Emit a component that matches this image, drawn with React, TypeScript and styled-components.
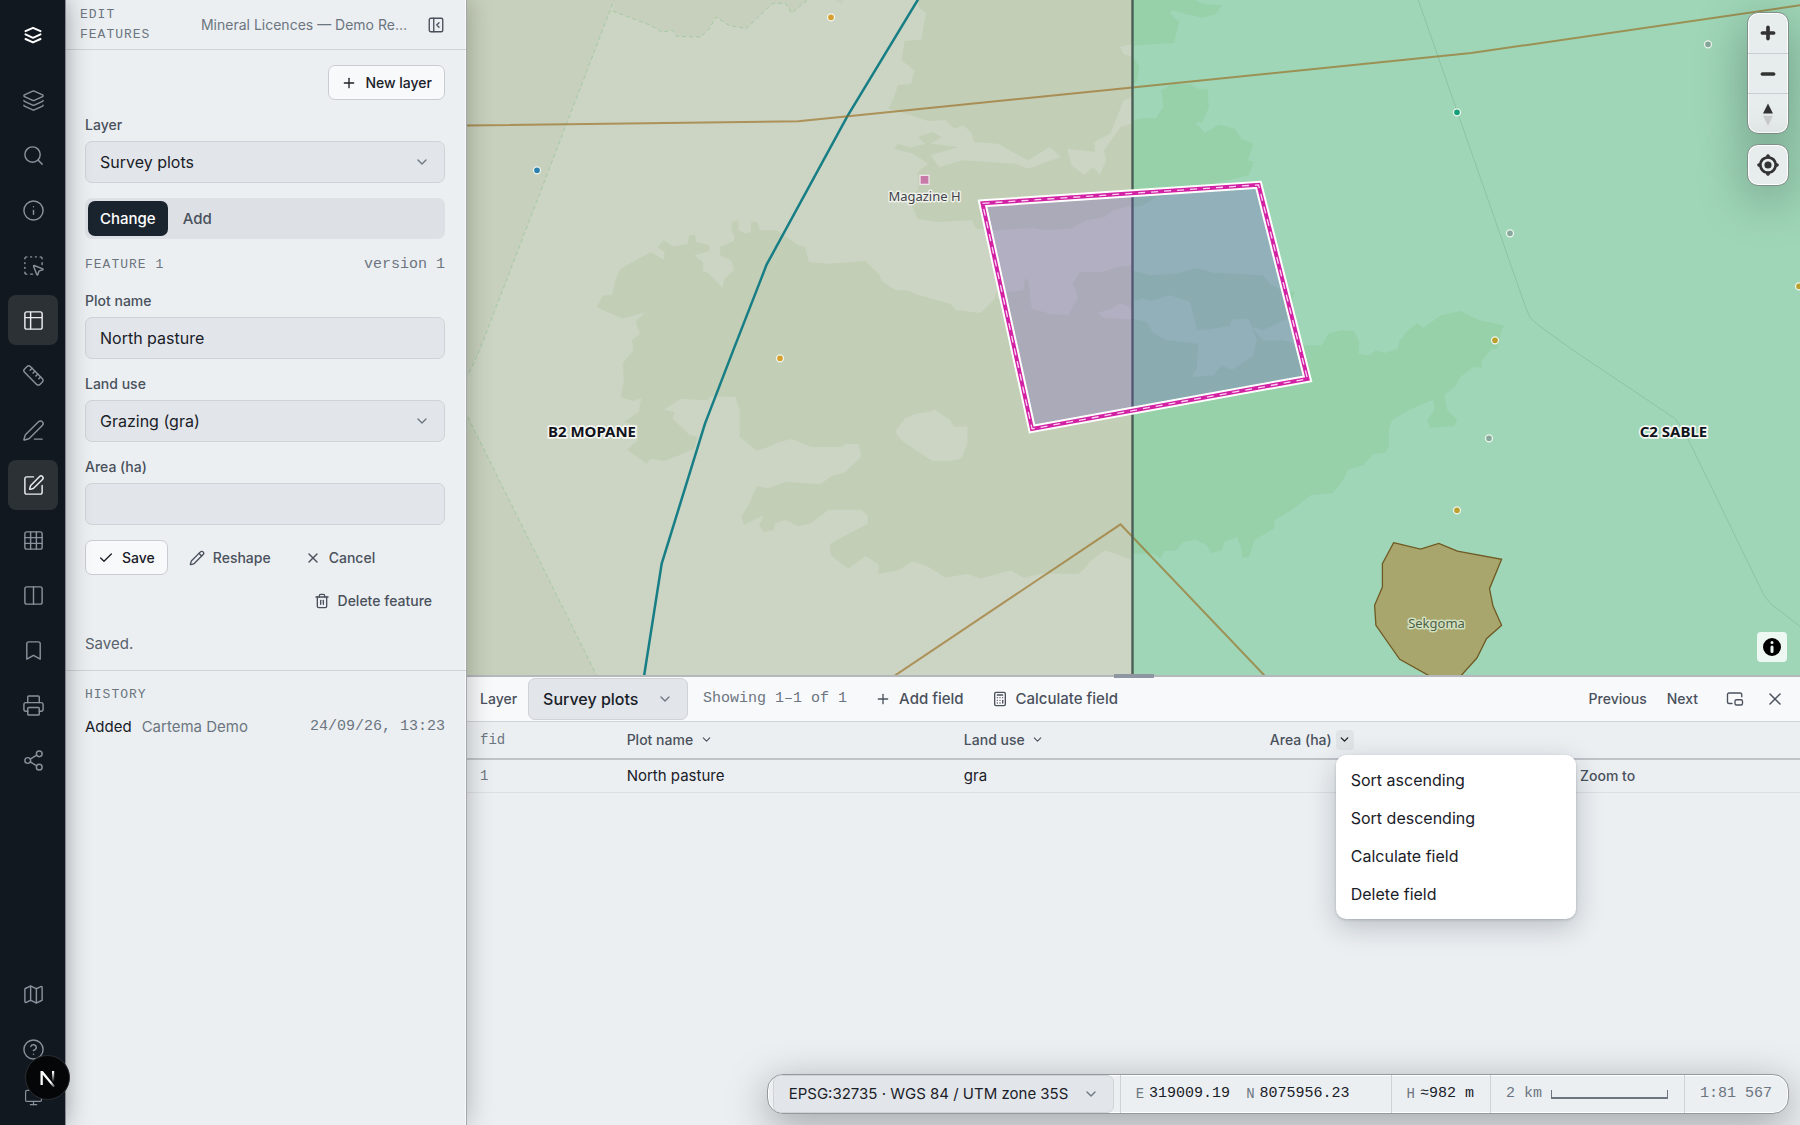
import React from "react";
import styled, { createGlobalStyle, css } from "styled-components";
import {
  Bookmark,
  Calculator,
  Check,
  ChevronDown,
  CircleHelp,
  Columns2,
  Grid3x3,
  Info,
  Layers,
  Map as MapIcon,
  Monitor,
  PanelLeftClose,
  Pencil,
  PenLine,
  PictureInPicture2,
  Plus,
  Printer,
  Ruler,
  Search,
  Share2,
  SquareDashedMousePointer,
  SquarePen,
  Trash2,
  X,
} from "lucide-react";

const color = {
  rail: "#12181f",
  railActive: "#2c3136",
  surface: "#ebeff2",
  raised: "#f8f9fb",
  field: "#e2e6ea",
  line: "#cfd2d7",
  ink: "#1a2028",
  text: "#4a515c",
  muted: "#6c7580",
};

const sans = `Inter, "Liberation Sans", sans-serif`;
const mono = `"Liberation Mono", "DejaVu Sans Mono", monospace`;

const GlobalStyle = createGlobalStyle`
  *, *::before, *::after { box-sizing: border-box; }
  body { margin: 0; background: ${color.surface}; color: ${color.ink}; font: 15px/22px ${sans}; }
  button, input, select { font: inherit; color: inherit; margin: 0; }
  button { cursor: pointer; }
`;

const Shell = styled.div`
  display: flex;
  height: 100vh;
  overflow: hidden;
  position: relative;
`;

/* ---------- Navigation rail ---------- */

const Rail = styled.nav`
  position: relative;
  z-index: 3;
  flex: none;
  width: 66px;
  margin-right: -1px;
  padding: 10px 7px 10px 8px;
  display: flex;
  flex-direction: column;
  gap: 5px;
  background: ${color.rail};
  border-right: 1px solid #868a90;
  box-shadow: 0 0 24px rgba(0, 0, 0, 0.34);
`;

const RailButton = styled.button<{ $active?: boolean; $short?: boolean }>`
  flex: none;
  display: grid;
  place-items: center;
  height: ${(p) => (p.$short ? 36 : 50)}px;
  padding: 0;
  border: 0;
  border-radius: 8px;
  background: ${(p) => (p.$active ? color.railActive : "transparent")};
  color: ${(p) => (p.$active ? "#eceef1" : "#89919c")};
`;

const Brand = styled.a`
  display: grid;
  place-items: center;
  height: 50px;
  margin-bottom: 10px;
  color: #fff;
`;

const Spacer = styled.div`
  flex: 1;
`;

const DevBadge = styled.button`
  position: absolute;
  z-index: 6;
  left: 25px;
  bottom: 25px;
  width: 45px;
  height: 45px;
  padding: 0;
  display: grid;
  place-items: center;
  border: 1px solid #2b2d30;
  border-radius: 50%;
  background: #050607;
`;

/* ---------- Edit panel ---------- */

const Panel = styled.aside`
  position: relative;
  z-index: 2;
  flex: none;
  width: 402px;
  background: ${color.surface};
  border-right: 1px solid #a3a7ab;
  box-shadow: inset -1px 0 0 #f9fafb, 0 0 24px rgba(0, 0, 0, 0.26);
`;

const PanelHeader = styled.header`
  display: flex;
  align-items: center;
  height: 50px;
  padding: 0 21px 0 15px;
  border-bottom: 1px solid ${color.line};
`;

const Eyebrow = styled.h2`
  margin: 0;
  font: 400 13px/20px ${mono};
  letter-spacing: 1px;
  text-transform: uppercase;
  color: ${color.muted};
`;

const Project = styled.span`
  flex: 1;
  margin-right: 20px;
  font-size: 14px;
  text-align: right;
  white-space: nowrap;
  color: ${color.muted};
`;

const IconButton = styled.button`
  display: grid;
  place-items: center;
  padding: 0;
  border: 0;
  background: none;
  color: ${color.text};
`;

const Form = styled.form`
  display: flex;
  flex-direction: column;
  gap: 15px;
  padding: 15px 21px 15px 20px;
  border-bottom: 1px solid ${color.line};
`;

const Row = styled.div<{ $gap?: number; $justify?: string; $wrap?: boolean }>`
  display: flex;
  align-items: center;
  flex-wrap: ${(p) => (p.$wrap ? "wrap" : "nowrap")};
  gap: ${(p) => p.$gap ?? 0}px;
  justify-content: ${(p) => p.$justify ?? "flex-start"};
`;

const Button = styled.button<{ $solid?: boolean; $push?: boolean }>`
  display: inline-flex;
  align-items: center;
  gap: 8px;
  height: 35px;
  padding: 0 12px;
  border: 1px solid ${(p) => (p.$solid ? "#c9ccd2" : "transparent")};
  border-radius: 7px;
  background: ${(p) => (p.$solid ? color.raised : "transparent")};
  color: ${(p) => (p.$solid ? color.ink : color.text)};
  font-weight: 500;
  font-size: 14px;
  white-space: nowrap;
  ${(p) => p.$push && "margin-left: auto;"}
`;

const Field = styled.div`
  display: flex;
  flex-direction: column;
  gap: 6px;
`;

const Label = styled.label`
  font: 500 14px/20px ${sans};
  color: ${color.text};
`;

const control = css`
  width: 100%;
  height: 42px;
  padding: 0 14px;
  border: 1px solid ${color.line};
  border-radius: 7px;
  background: ${color.field};
  color: ${color.ink};
  font-size: 16px;
  outline: none;
`;

const TextInput = styled.input`
  ${control}
`;

const SelectBox = styled.div<{ $width?: number }>`
  position: relative;
  flex: none;
  width: ${(p) => (p.$width ? `${p.$width}px` : "100%")};
  svg {
    position: absolute;
    right: 15px;
    top: 50%;
    margin-top: -8px;
    color: ${color.muted};
    pointer-events: none;
  }
`;

const NativeSelect = styled.select<{ $strong?: boolean }>`
  ${control}
  display: block;
  appearance: none;
  font-weight: ${(p) => (p.$strong ? 500 : 400)};
`;

const Segmented = styled.div`
  display: flex;
  gap: 3px;
  height: 41px;
  padding: 3px;
  border-radius: 7px;
  background: #dde0e4;
`;

const Segment = styled.button<{ $active?: boolean }>`
  padding: 0 12px;
  border: 0;
  border-radius: 7px;
  font-weight: 500;
  font-size: 15px;
  background: ${(p) => (p.$active ? "#1a242e" : "transparent")};
  color: ${(p) => (p.$active ? "#fff" : color.text)};
`;

const Mono = styled.span<{ $dark?: boolean }>`
  font: 400 15px/22px ${mono};
  white-space: nowrap;
  color: ${(p) => (p.$dark ? color.ink : color.muted)};
`;

const Muted = styled.span`
  color: ${color.muted};
`;

const Message = styled.p`
  margin: 0;
  color: #59616c;
`;

const History = styled.section`
  display: flex;
  flex-direction: column;
  gap: 11px;
  padding: 14px 21px 0 20px;
`;

/* ---------- Map ---------- */

const Workspace = styled.main`
  flex: 1;
  min-width: 0;
  display: flex;
  flex-direction: column;
  position: relative;
`;

const MapArea = styled.section`
  flex: 301;
  min-height: 0;
  position: relative;
  overflow: hidden;
`;

const MapCanvas = styled.svg`
  display: block;
  width: 100%;
  height: 100%;
`;

const MapControls = styled.div`
  position: absolute;
  top: 12px;
  right: 11px;
  display: flex;
  flex-direction: column;
  gap: 10px;
`;

const ControlGroup = styled.div`
  width: 42px;
  border: 1px solid #7f9088;
  border-radius: 11px;
  overflow: hidden;
  background: #e7ecec;
  box-shadow: 0 12px 48px rgba(20, 50, 40, 0.38), inset 0 0 0 1px #fff;
`;

const ControlButton = styled.button`
  display: grid;
  place-items: center;
  width: 40px;
  height: 40px;
  padding: 0;
  border: 0;
  background: transparent;
  & + & {
    border-top: 1px solid #c9cfd0;
  }
`;

const Attribution = styled.button`
  position: absolute;
  right: 13px;
  bottom: 13px;
  width: 30px;
  height: 30px;
  padding: 0;
  border: 0;
  border-radius: 4px;
  background: rgba(255, 255, 255, 0.82);
`;

/* A sheet is a traced part of the land cover with its own origin and grid step. */
const sheet =
  (ox: number, oy: number, sx: number, sy: number) =>
  (...v: number[]): string => {
    const out: string[] = [];
    for (let i = 0; i < v.length; i += 2) {
      out.push(`${(ox + v[i] * sx).toFixed(1)},${(oy + v[i + 1] * sy).toFixed(1)}`);
    }
    return out.join(" ");
  };

const STEP_X = 680 / 1568;
const STEP = 1 / 3;
const nw = sheet(460, 0, STEP_X, STEP);
const ne = sheet(1120, 0, STEP_X, STEP);
const sw = sheet(460, 340, STEP_X, STEP);
const se = sheet(1120, 340, STEP_X, STEP);
const mid = sheet(970, 175, STEP, STEP);

const reserve = [
  `${nw(0, -10, 358, -10, 355, 0, 45, 1050)} ${sw(18, 105, 0, 160)}`,
  sw(0, 190, 18, 230, 315, 1005, 0, 1010),
  nw(358, -10, 352, 32, 440, 75, 465, 95, 490, 90, 500, 108, 555, 110, 575, 85, 590, 50, 620, 75, 660, 85, 680, 60, 720, 10, 750, 8, 765, 38, 800, 0, 800, -10),
  nw(865, -10, 865, 0, 880, 12, 885, 0, 885, -10),
];

const woodWest = [
  [
    nw(1050, -10, 1058, 20, 1075, 40, 1068, 80, 1065, 118, 1025, 122, 1018, 180, 1048, 210, 1040, 250, 1010, 255, 998, 300, 988, 325, 1040, 345, 1080, 362),
    nw(1120, 360, 1140, 385, 1160, 375, 1178, 395, 1185, 425, 1240, 430, 1310, 480, 1360, 440, 1385, 470, 1310, 505, 1280, 490, 1160, 480, 1105, 500),
    nw(1085, 465, 1150, 440, 1085, 430, 1110, 410, 1090, 395, 1055, 410, 1072, 430, 1040, 442, 1010, 430, 1000, 445, 1045, 460, 1080, 490, 1055, 515),
    nw(1058, 560, 1040, 610, 1055, 655, 1100, 665, 1180, 660, 1190, 685),
    mid(75, 165, 190, 158, 225, 165, 300, 160, 350, 135, 405, 125, 430, 105, 487, 90),
    nw(1550, -10),
  ].join(" "),
  [
    nw(400, 1050, 397, 1020, 415, 1000, 405, 965, 428, 935, 375, 955, 315, 920, 330, 885, 350, 885, 358, 840, 370, 805, 440, 755, 470, 778, 472, 755, 455, 740, 470, 720, 490, 738, 525, 732),
    nw(528, 705, 542, 703, 545, 725, 575, 735, 575, 752, 540, 765, 560, 785, 560, 812, 575, 820, 605, 862, 610, 835, 632, 810, 625, 780, 600, 765, 600, 740, 632, 722, 632, 705),
    nw(625, 690, 628, 665, 642, 660, 642, 690, 660, 700, 670, 695, 672, 663, 685, 665, 692, 690, 730, 690, 780, 735, 795, 740, 805, 785, 850, 790, 935, 782, 965, 820, 975, 845, 1005, 870),
    nw(1030, 870, 1060, 885, 1130, 910, 1145, 930, 1200, 938, 1230, 900, 1240, 870),
    mid(80, 370, 115, 350, 160, 345, 165, 310, 175, 315, 185, 400, 240, 415, 295, 420, 325, 365, 308, 325, 330, 290, 400, 290, 440, 275, 487, 270),
    sw(1550, 660, 1520, 645, 1488, 630, 1455, 660, 1440, 685, 1425, 700, 1340, 700, 1300, 712, 1270, 690, 1200, 715, 1170, 700, 1120, 712, 1080, 680, 1045, 663, 1010, 690, 965, 700),
    sw(965, 672, 935, 648, 895, 685, 855, 645, 852, 612, 890, 585, 940, 550, 940, 525, 925, 508, 850, 508, 810, 548, 780, 558, 750, 538, 725, 550, 725, 568, 700, 575, 690, 555, 700, 525),
    sw(655, 553, 648, 530, 665, 495, 685, 436, 710, 445, 750, 424, 830, 432, 860, 405, 885, 398, 925, 350, 920, 312, 890, 310, 880, 320, 810, 320, 765, 296, 735, 305, 720, 315, 685, 332),
    sw(645, 290, 645, 210, 635, 170, 580, 168, 570, 180, 510, 175, 470, 208, 495, 215, 490, 235, 530, 285, 548, 290, 540, 325, 500, 348, 470, 362, 440, 355, 430, 370, 385, 328, 410, 300, 410, 255),
    sw(378, 245, 412, 215, 418, 172, 400, 182, 370, 170, 378, 120, 375, 70, 390, 45),
  ].join(" "),
];

const gladeWest = [
  sw(1095, 207, 1130, 240, 1140, 260, 1170, 258, 1170, 310, 1155, 355, 1130, 362, 1090, 362, 1040, 320, 1018, 300, 1003, 275, 1025, 235, 1050, 220, 1080, 215),
  nw(1400, 445, 1465, 455, 1462, 425, 1500, 400, 1530, 300, 1552, 290, 1552, 370, 1525, 378, 1485, 450, 1490, 480, 1475, 525, 1460, 500, 1440, 525, 1410, 495),
  nw(1522, 140, 1552, 130, 1552, 170, 1530, 160),
  mid(385, 412, 425, 400, 450, 382, 487, 400, 487, 432, 400, 428),
];

const woodEast = [
  ne(28, -10, 175, -10, 175, 0, 190, 10, 235, 15, 220, 42, 190, 52, 150, 40, 120, 30, 115, 40, 137, 65, 130, 95, 125, 128, 60, 133, 28, 136),
  ne(28, 165, 45, 200, 40, 240, 28, 262),
  `${ne(28, 360, 60, 352, 82, 355, 100, 320, 95, 270, 120, 252, 160, 250, 180, 265, 202, 265, 205, 320, 190, 365, 175, 368, 195, 397, 230, 372, 265, 385, 280, 415, 308, 430, 295, 480, 308, 485, 297, 525, 230, 545)} ${mid(600, 60, 560, 65, 520, 90, 486, 95)}`,
  [
    mid(486, 285, 540, 300, 620, 295, 680, 278, 730, 292, 880, 300, 900, 325, 935, 345, 975, 350, 965, 380, 950, 430, 1000, 510, 1040, 510),
    ne(465, 1035, 480, 1000, 510, 990, 540, 992, 552, 1025),
    se(550, 40, 575, 45, 590, 30, 610, 38, 640, 25, 645, 0),
    ne(660, 995, 685, 968, 700, 982, 740, 945, 785, 932, 830, 960, 885, 975, 878, 1000, 870, 1045),
    se(858, 25, 835, 60, 835, 82, 815, 80, 785, 110, 775, 135, 748, 165, 755, 210, 778, 240, 770, 258, 715, 262, 708, 240, 725, 210, 722, 178, 665, 210, 628, 240, 620, 265, 620, 320, 610, 338, 585, 342, 560, 375, 525, 388),
    se(515, 420, 490, 458, 440, 465, 400, 505, 357, 540, 355, 565, 310, 600, 298, 650, 282, 652, 280, 625, 270, 590, 240, 605, 235, 630, 210, 638, 200, 615, 175, 598, 145, 605, 130, 630, 100, 633, 95, 655, 75, 640, 28, 640),
  ].join(" "),
];

const gladeEast = [
  mid(486, 380, 520, 368, 540, 378, 600, 360, 660, 380, 672, 430, 680, 465, 720, 462, 780, 452, 785, 432, 835, 430, 860, 490, 850, 540, 785, 585, 755, 570, 730, 600, 665, 605, 680, 580, 685, 505, 590, 495, 545, 470, 530, 440, 486, 430),
  mid(845, 455, 880, 465, 940, 435, 965, 430, 990, 510, 940, 495, 880, 495, 865, 480),
];

const wells: [number, number, string][] = [
  [831, 17, "#d79f2d"],
  [537, 170, "#2c7fae"],
  [780, 358, "#d79f2d"],
  [1708, 44, "#86a79a"],
  [1457, 112, "#119f77"],
  [1510, 233, "#86a79a"],
  [1799, 286, "#bba12c"],
  [1495, 340, "#bba12c"],
  [1489, 438, "#86a79a"],
  [1457, 510, "#bba12c"],
];

const MapLabel = styled.text<{ $bold?: boolean }>`
  font: ${(p) => (p.$bold ? "700 15px" : "400 13px")} "Noto Sans", sans-serif;
  text-anchor: middle;
  paint-order: stroke;
  stroke-linejoin: round;
`;

const plotRing = "982.5,203 1258.5,184.500 1307.5,378.500 1032,428.500";

function MapDrawing() {
  return (
    <MapCanvas viewBox="467 -1 1333 676" preserveAspectRatio="xMidYMid slice" role="img" aria-label="Licence map">
      <rect x="0" y="-400" width="1133" height="1600" fill="#ccd5c3" />
      {reserve.map((p) => (
        <polygon key={p} points={p} fill="#c7d0bc" />
      ))}
      {woodWest.map((p) => (
        <polygon key={p} points={p} fill="#c2ceb6" />
      ))}
      {gladeWest.map((p) => (
        <polygon key={p} points={p} fill="#ccd5c3" />
      ))}
      <rect x="1132.5" y="-400" width="1400" height="1600" fill="#a0d6b8" />
      {woodEast.map((p) => (
        <polygon key={p} points={p} fill="#96d1aa" />
      ))}
      {gladeEast.map((p) => (
        <polygon key={p} points={p} fill="#a0d6b8" />
      ))}
      <g fill="none" stroke="#a5c9a4" strokeWidth="1" strokeDasharray="4 3">
        <polyline points={`${nw(358, -10, 355, 0, 45, 1050)} ${sw(18, 105)}`} />
        <polyline points={sw(18, 230, 315, 1005)} />
        <polyline points={nw(352, 32, 440, 75, 465, 95, 490, 90, 500, 108, 555, 110, 575, 85, 590, 50, 620, 75, 660, 85, 680, 60, 720, 10, 750, 8, 765, 38, 800, 0)} />
      </g>
      <polyline
        points={`${ne(684, -16, 688, 0, 935, 920, 945, 950, 965, 975, 1045, 1050)} ${se(1280, 235, 1300, 270, 1485, 765, 1500, 790, 1568, 858)}`}
        fill="none"
        stroke="#8cc4a6"
        strokeWidth="1"
      />
      <polyline
        points={`${nw(1062, -16, 1055, 0, 893, 348, 707, 793, 630, 1050)} ${sw(565, 250, 465, 670, 424, 1010)}`}
        fill="none"
        stroke="#177e86"
        strokeWidth="2.5"
      />
      <g fill="none" stroke="#9a6a1c" strokeOpacity="0.64" strokeWidth="2">
        <polyline points={`${nw(0, 376, 780, 363, 895, 348)} ${ne(0, 265, 810, 158, 1568, 15)}`} />
        <polyline points={`${sw(1000, 1008, 1523, 552)} ${se(335, 1008)}`} />
      </g>
      <polygon
        points={se(631, 607, 693, 626, 735, 609, 778, 632, 880, 657, 852, 745, 860, 797, 880, 855, 845, 895, 823, 953, 780, 1015, 725, 1015, 645, 957, 590, 855, 587, 795, 605, 740, 605, 670)}
        fill="#a8a66c"
        stroke="#6f5a24"
        strokeWidth="1.3"
      />
      <path d="M1132.5 -400V1100" stroke="#4b5f57" strokeWidth="2.4" />
      <polygon points={plotRing} fill="rgba(106, 75, 192, 0.27)" />
      <g fill="none">
        <polygon points={plotRing} stroke="#fff" strokeWidth="8" />
        <polygon points={plotRing} stroke="#d221a3" strokeWidth="4" />
        <polygon points={plotRing} stroke="#fbd3f1" strokeWidth="1.3" strokeDasharray="7 6" />
      </g>
      {wells.map(([x, y, fill]) => (
        <circle key={`${x}-${y}`} cx={x} cy={y} r="3.5" fill={fill} stroke="#eef6ee" strokeWidth="1.3" />
      ))}
      <rect x="920" y="175" width="9" height="9" fill="#c77aa8" stroke="#efe4ea" strokeWidth="1.3" />
      <MapLabel x="924.5" y="201" fill="#3f4349" stroke="#eef1ea" strokeWidth="3">
        Magazine H
      </MapLabel>
      <MapLabel x="1436.5" y="628" fill="#4d6044" stroke="#d3e0c2" strokeWidth="3">
        Sekgoma
      </MapLabel>
      <MapLabel $bold x="592" y="437" fill="#10141c" stroke="#f4f6f2" strokeWidth="3.5">
        B2 MOPANE
      </MapLabel>
      <MapLabel $bold x="1673.5" y="437" fill="#10141c" stroke="#f4f6f2" strokeWidth="3.5">
        C2 SABLE
      </MapLabel>
    </MapCanvas>
  );
}

/* ---------- Attribute table ---------- */

const Drawer = styled.section`
  flex: 200;
  position: relative;
  border-top: 2px solid #b4b8bb;
`;

const Grip = styled.div`
  position: absolute;
  top: -3px;
  left: 50%;
  width: 40px;
  height: 4px;
  margin-left: -20px;
  background: #8e96a1;
`;

const Toolbar = styled.div`
  display: flex;
  align-items: center;
  height: 45px;
  padding: 0 15px 0 13px;
  background: ${color.raised};
  border-bottom: 1px solid ${color.line};
`;

const ToolbarGap = styled.div<{ $w: number }>`
  flex: none;
  width: ${(p) => p.$w}px;
`;

const PlainButton = styled.button<{ $size?: number }>`
  display: inline-flex;
  align-items: center;
  gap: 8px;
  padding: 0;
  border: 0;
  background: none;
  color: ${color.text};
  font-weight: 500;
  font-size: ${(p) => p.$size ?? 14}px;
  line-height: 20px;
  white-space: nowrap;
`;

const Grid = styled.table`
  width: 100%;
  table-layout: fixed;
  border-collapse: separate;
  border-spacing: 0;
  th,
  td {
    padding: 0 13px;
    text-align: left;
    white-space: nowrap;
  }
  th {
    height: 38px;
    border-bottom: 2px solid #bfc3c8;
    font: 500 14px/20px ${sans};
    color: ${color.text};
  }
  td {
    height: 33px;
    border-bottom: 1px solid #dcdfe3;
    font-size: 15px;
    line-height: 20px;
    color: ${color.ink};
  }
`;

const Heading = styled.div<{ $end?: boolean }>`
  display: flex;
  align-items: center;
  justify-content: ${(p) => (p.$end ? "flex-end" : "flex-start")};
  gap: 4px;
`;

const FidText = styled.span`
  font: 400 14px/20px ${mono};
  color: ${color.muted};
`;

const ActionCell = styled.td`
  && {
    padding-left: 16%;
  }
`;

const MenuAnchor = styled.div`
  position: relative;
`;

const ColumnButton = styled.button<{ $open?: boolean }>`
  display: grid;
  place-items: center;
  width: 18px;
  height: 20px;
  padding: 0;
  border: 0;
  border-radius: 4px;
  background: ${(p) => (p.$open ? "#e0e4e7" : "transparent")};
  color: ${(p) => (p.$open ? color.ink : color.text)};
`;

const Menu = styled.div`
  position: absolute;
  z-index: 4;
  top: 25px;
  left: 0;
  width: 240px;
  padding: 6px 0;
  display: flex;
  flex-direction: column;
  border-radius: 10px;
  background: #fff;
  box-shadow: 0 8px 28px rgba(20, 28, 40, 0.22), 0 1px 3px rgba(20, 28, 40, 0.2);
`;

const MenuItem = styled.button`
  height: 38px;
  padding: 0 15px;
  border: 0;
  background: none;
  text-align: left;
  font-size: 16px;
  font-weight: 400;
  color: ${color.ink};
`;

/* ---------- Status bar ---------- */

const StatusBar = styled.footer`
  position: absolute;
  z-index: 3;
  right: 11px;
  bottom: 11px;
  height: 40px;
  display: flex;
  overflow: hidden;
  padding-left: 5px;
  border: 1px solid #94999e;
  border-radius: 16px;
  background: ${color.surface};
  box-shadow: 0 10px 40px rgba(0, 0, 0, 0.34), inset 0 0 0 1px #fff;
`;

const StatusCell = styled.div<{ $wide?: boolean }>`
  display: flex;
  align-items: center;
  gap: 4px;
  padding: 0 16px 0 15px;
  padding-right: ${(p) => (p.$wide ? 41 : 16)}px;
  border-left: 1px solid ${color.line};
`;

const StatusSelect = styled(SelectBox)`
  margin-right: 6px;
  select {
    height: 38px;
    padding: 0 15px;
    font-size: 15px;
  }
`;

const Axis = styled.span`
  margin-right: 1px;
  font: 400 14px/22px ${mono};
  color: ${color.muted};
  & ~ & {
    margin-left: 12px;
  }
`;

const ScaleBar = styled.span`
  width: 117px;
  height: 9px;
  margin-left: 5px;
  border: 1px solid ${color.muted};
  border-width: 0 1px 2px;
`;

type ChoiceProps = { id: string; value: string; strong?: boolean };

function Choice({ id, value, strong }: ChoiceProps) {
  return (
    <>
      <NativeSelect id={id} defaultValue={value} $strong={strong} aria-label={value}>
        <option>{value}</option>
      </NativeSelect>
      <ChevronDown size={16} strokeWidth={2} />
    </>
  );
}

const GridIcon = () => (
  <svg width="23" height="23" viewBox="0 0 24 24" fill="none" stroke="currentColor" strokeWidth="1.5" strokeLinejoin="round">
    <rect x="3" y="3" width="18" height="18" rx="2" />
    <path d="M9 3v18M3 9h18" />
  </svg>
);

const tools = [
  { name: "Layers", Icon: Layers },
  { name: "Search", Icon: Search },
  { name: "Identify", Icon: Info },
  { name: "Select", Icon: SquareDashedMousePointer },
  { name: "Attribute table", Icon: GridIcon, active: true },
  { name: "Measure", Icon: Ruler },
  { name: "Draw", Icon: PenLine },
  { name: "Edit features", Icon: SquarePen, active: true },
  { name: "Graticule", Icon: Grid3x3 },
  { name: "Compare", Icon: Columns2 },
  { name: "Bookmarks", Icon: Bookmark },
  { name: "Print", Icon: Printer },
  { name: "Share", Icon: Share2 },
];

export default function App() {
  return (
    <Shell>
      <GlobalStyle />

      <Rail aria-label="Tools">
        <Brand href="#" aria-label="Home">
          <svg width="20" height="20" viewBox="0 0 20 20" fill="none" stroke="currentColor" strokeWidth="2" strokeLinejoin="round" strokeLinecap="round">
            <path d="M2.500 6.200 10 2.800l7.500 3.400M2.500 9.400 10 12.800l7.500-3.400M2.500 14 10 17.400l7.500-3.400" />
          </svg>
        </Brand>
        {tools.map(({ name, Icon, active }) => (
          <RailButton key={name} $active={active} aria-label={name}>
            <Icon size={23} strokeWidth={1.5} />
          </RailButton>
        ))}
        <Spacer />
        <RailButton aria-label="Basemap">
          <MapIcon size={23} strokeWidth={1.5} />
        </RailButton>
        <RailButton aria-label="Help">
          <CircleHelp size={23} strokeWidth={1.5} />
        </RailButton>
        <RailButton $short aria-label="Display">
          <Monitor size={19} strokeWidth={1.5} />
        </RailButton>
      </Rail>

      <DevBadge aria-label="Developer tools">
        <svg width="20" height="20" viewBox="0 0 20 20" fill="none">
          <defs>
            <linearGradient id="stem" x1="0" y1="0" x2="0" y2="1">
              <stop offset="0.1" stopColor="#fff" />
              <stop offset="1" stopColor="#fff" stopOpacity="0" />
            </linearGradient>
            <linearGradient id="slash" x1="0" y1="0" x2="1" y2="1">
              <stop offset="0.7" stopColor="#fff" />
              <stop offset="1" stopColor="#fff" stopOpacity="0.2" />
            </linearGradient>
          </defs>
          <path d="M2.500 17V3h2.300l12.200 15-1.700 1.300L4.800 6.800V17z" fill="url(#slash)" />
          <rect x="14" y="3" width="2.200" height="11" fill="url(#stem)" />
        </svg>
      </DevBadge>

      <Panel>
        <PanelHeader>
          <Eyebrow>
            Edit
            <br />
            features
          </Eyebrow>
          <Project>Mineral Licences — Demo Re…</Project>
          <IconButton aria-label="Collapse panel">
            <PanelLeftClose size={18} strokeWidth={1.8} />
          </IconButton>
        </PanelHeader>

        <Form onSubmit={(e) => e.preventDefault()}>
          <Row $justify="flex-end">
            <Button type="button" $solid>
              <Plus size={16} />
              New layer
            </Button>
          </Row>
          <Field>
            <Label htmlFor="layer">Layer</Label>
            <SelectBox>
              <Choice id="layer" value="Survey plots" />
            </SelectBox>
          </Field>
          <Segmented>
            <Segment type="button" $active>
              Change
            </Segment>
            <Segment type="button">Add</Segment>
          </Segmented>
          <Row $justify="space-between">
            <Eyebrow>Feature 1</Eyebrow>
            <Mono>version 1</Mono>
          </Row>
          <Field>
            <Label htmlFor="plot-name">Plot name</Label>
            <TextInput id="plot-name" defaultValue="North pasture" />
          </Field>
          <Field>
            <Label htmlFor="land-use">Land use</Label>
            <SelectBox>
              <Choice id="land-use" value="Grazing (gra)" />
            </SelectBox>
          </Field>
          <Field>
            <Label htmlFor="area">Area (ha)</Label>
            <TextInput id="area" />
          </Field>
          <Row $gap={8} $wrap>
            <Button type="submit" $solid>
              <Check size={16} />
              Save
            </Button>
            <Button type="button">
              <Pencil size={16} />
              Reshape
            </Button>
            <Button type="button">
              <X size={16} />
              Cancel
            </Button>
            <Button type="button" $push>
              <Trash2 size={16} />
              Delete feature
            </Button>
          </Row>
          <Message>Saved.</Message>
        </Form>

        <History>
          <Eyebrow>History</Eyebrow>
          <Row $gap={10}>
            <span>Added</span>
            <Muted>Cartema Demo</Muted>
            <Spacer />
            <Mono>24/09/26, 13:23</Mono>
          </Row>
        </History>
      </Panel>

      <Workspace>
        <MapArea>
          <MapDrawing />
          <MapControls>
            <ControlGroup>
              <ControlButton aria-label="Zoom in">
                <svg width="36" height="36" viewBox="0 0 29 29" fill="#333">
                  <path d="M14.500 8.500c-.75 0-1.500.75-1.500 1.500v3h-3c-.75 0-1.500.75-1.500 1.500S9.250 16 10 16h3v3c0 .75.75 1.500 1.500 1.500S16 19.750 16 19v-3h3c.75 0 1.500-.75 1.500-1.500S19.750 13 19 13h-3v-3c0-.75-.75-1.500-1.500-1.500" />
                </svg>
              </ControlButton>
              <ControlButton aria-label="Zoom out">
                <svg width="36" height="36" viewBox="0 0 29 29" fill="#333">
                  <path d="M10 13c-.75 0-1.500.75-1.500 1.500S9.250 16 10 16h9c.75 0 1.500-.75 1.500-1.500S19.750 13 19 13z" />
                </svg>
              </ControlButton>
              <ControlButton aria-label="Reset bearing">
                <svg width="36" height="36" viewBox="0 0 29 29" fill="#333">
                  <path d="m10.500 14 4-8 4 8z" />
                  <path d="m10.500 16 4 8 4-8z" fill="#ccc" />
                </svg>
              </ControlButton>
            </ControlGroup>
            <ControlGroup>
              <ControlButton aria-label="Find my location">
                <svg width="36" height="36" viewBox="0 0 20 20" fill="#333">
                  <path d="M10 4C9 4 9 5 9 5v.1A5 5 0 0 0 5.100 9H5s-1 0-1 1 1 1 1 1h.1A5 5 0 0 0 9 14.900v.1s0 1 1 1 1-1 1-1v-.1a5 5 0 0 0 3.900-3.900h.1s1 0 1-1-1-1-1-1h-.1A5 5 0 0 0 11 5.100V5s0-1-1-1m0 2.500a3.500 3.500 0 1 1 0 7 3.500 3.500 0 1 1 0-7" />
                  <circle cx="10" cy="10" r="2" />
                </svg>
              </ControlButton>
            </ControlGroup>
          </MapControls>
          <Attribution aria-label="Attribution">
            <svg width="30" height="30" viewBox="0 0 20 20" fillRule="evenodd">
              <path d="M4 10a6 6 0 1 0 12 0 6 6 0 1 0-12 0m5-3a1 1 0 1 0 2 0 1 1 0 1 0-2 0m0 3a1 1 0 1 1 2 0v3a1 1 0 1 1-2 0" />
            </svg>
          </Attribution>
        </MapArea>

        <Drawer>
          <Grip />
          <Toolbar>
            <Label htmlFor="table-layer">Layer</Label>
            <ToolbarGap $w={11} />
            <SelectBox $width={160}>
              <Choice id="table-layer" value="Survey plots" strong />
            </SelectBox>
            <ToolbarGap $w={15} />
            <Mono>Showing 1–1 of 1</Mono>
            <ToolbarGap $w={28} />
            <PlainButton $size={15}>
              <Plus size={16} />
              Add field
            </PlainButton>
            <ToolbarGap $w={28} />
            <PlainButton $size={15}>
              <Calculator size={16} />
              Calculate field
            </PlainButton>
            <Spacer />
            <PlainButton>Previous</PlainButton>
            <ToolbarGap $w={20} />
            <PlainButton>Next</PlainButton>
            <ToolbarGap $w={28} />
            <IconButton aria-label="Undock table">
              <PictureInPicture2 size={18} strokeWidth={1.8} />
            </IconButton>
            <ToolbarGap $w={21} />
            <IconButton aria-label="Close table">
              <X size={20} strokeWidth={1.8} />
            </IconButton>
          </Toolbar>
          <Grid>
            <colgroup>
              <col style={{ width: "11%" }} />
              <col style={{ width: "25.300%" }} />
              <col style={{ width: "15%" }} />
              <col style={{ width: "16.200%" }} />
              <col />
            </colgroup>
            <thead>
              <tr>
                <th>
                  <FidText>fid</FidText>
                </th>
                <th>
                  <Heading>
                    Plot name
                    <ColumnButton aria-label="Plot name options">
                      <ChevronDown size={13} />
                    </ColumnButton>
                  </Heading>
                </th>
                <th>
                  <Heading>
                    Land use
                    <ColumnButton aria-label="Land use options">
                      <ChevronDown size={13} />
                    </ColumnButton>
                  </Heading>
                </th>
                <th>
                  <Heading $end>
                    Area (ha)
                    <MenuAnchor>
                      <ColumnButton $open aria-label="Area options" aria-expanded="true">
                        <ChevronDown size={13} strokeWidth={2.5} />
                      </ColumnButton>
                      <Menu role="menu">
                        <MenuItem role="menuitem">Sort ascending</MenuItem>
                        <MenuItem role="menuitem">Sort descending</MenuItem>
                        <MenuItem role="menuitem">Calculate field</MenuItem>
                        <MenuItem role="menuitem">Delete field</MenuItem>
                      </Menu>
                    </MenuAnchor>
                  </Heading>
                </th>
                <th aria-label="Actions" />
              </tr>
            </thead>
            <tbody>
              <tr>
                <td>
                  <FidText>1</FidText>
                </td>
                <td>North pasture</td>
                <td>gra</td>
                <td />
                <ActionCell>
                  <PlainButton>Zoom to</PlainButton>
                </ActionCell>
              </tr>
            </tbody>
          </Grid>
        </Drawer>

        <StatusBar>
          <StatusSelect $width={341}>
            <Choice id="crs" value="EPSG:32735 · WGS 84 / UTM zone 35S" />
          </StatusSelect>
          <StatusCell $wide>
            <Axis>E</Axis>
            <Mono $dark>319009.19</Mono>
            <Axis>N</Axis>
            <Mono $dark>8075956.23</Mono>
          </StatusCell>
          <StatusCell>
            <Axis>H</Axis>
            <Mono $dark>≈982 m</Mono>
          </StatusCell>
          <StatusCell>
            <Mono>2 km</Mono>
            <ScaleBar />
          </StatusCell>
          <StatusCell>
            <Mono>1:81 567</Mono>
          </StatusCell>
        </StatusBar>
      </Workspace>
    </Shell>
  );
}
